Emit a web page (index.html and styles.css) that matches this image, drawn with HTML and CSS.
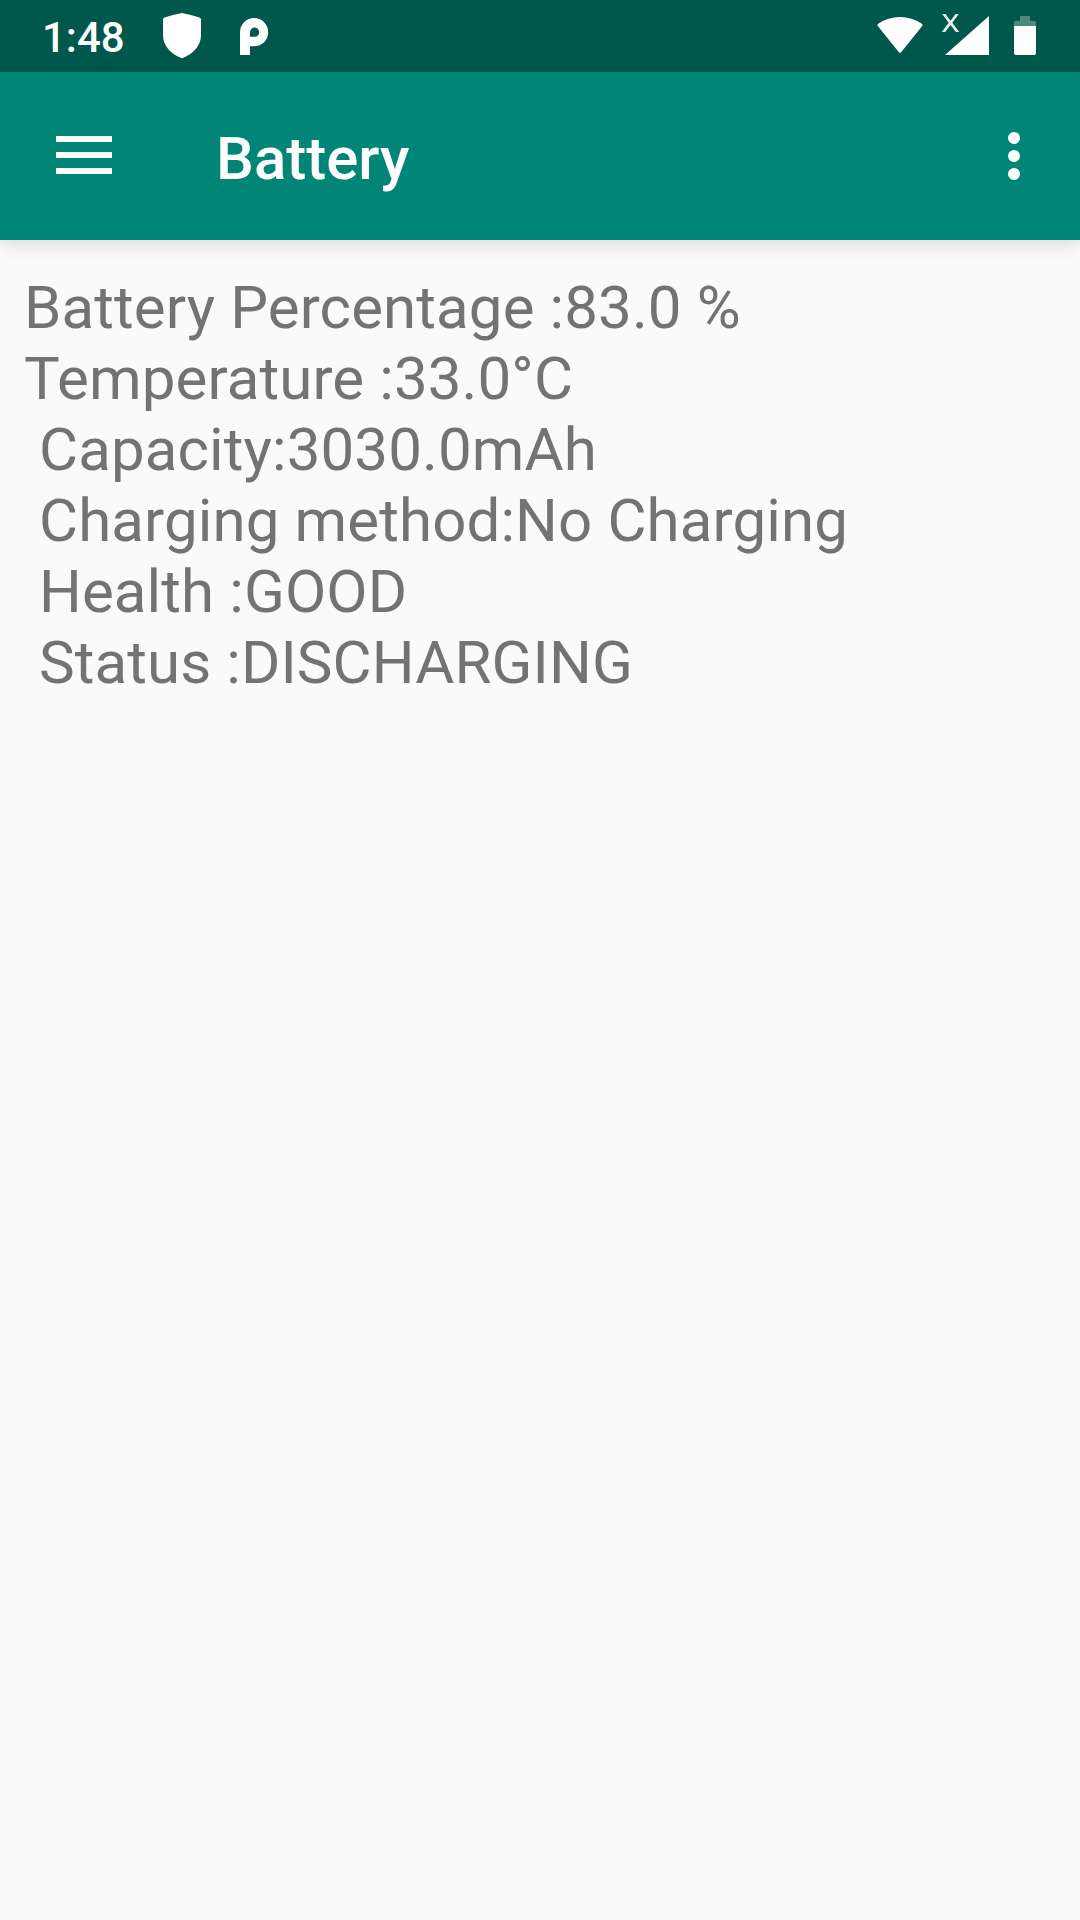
FILE: index.html
```html
<!DOCTYPE html>
<html lang="en">
<head>
<meta charset="utf-8">
<title>Battery</title>
<link rel="stylesheet" href="styles.css">
</head>
<body>
<div class="status-bar">
  <div class="status-left">
    <span class="clock">1:48</span>
    <svg class="shield" width="38" height="46" viewBox="0 0 38 46"><path d="M19 0C25 1 31 3 36.500 4.500Q38 5 38 6.500V22C38 33 30 41 19 45.300C8 41 0 33 0 22V6.500Q0 5 1.500 4.500C7 3 13 1 19 0Z"/></svg>
    <svg class="parking" width="30" height="38" viewBox="0 0 30 38"><path fill-rule="evenodd" d="M0 37V14.200A14.100 14.100 0 1 1 14.100 28.300H10V37ZM10 18.800V14.200A4.600 4.600 0 1 1 14.600 18.800Z"/></svg>
  </div>
  <div class="status-right">
    <svg width="46" height="37" viewBox="0 0 46 37"><path d="M1 9.300Q-.4 8 1.200 6.700C14-2.200 32-2.200 44.800 6.700Q46.400 8 45 9.300L24.300 35Q23 36.700 21.700 35Z"/></svg>
    <svg class="signal" width="48" height="42" viewBox="0 0 48 42"><path d="M48 2V41H4Z"/><path class="no-service" d="M1.200 0H4.500L9.500 6.700 14.500 0H17.800L11.300 8.800 18.200 18H14.900L9.500 11 4.100 18H.8L7.700 8.800Z"/></svg>
    <svg class="battery" width="22" height="39" viewBox="0 0 22 39"><path class="battery-empty" d="M6 0H16V5H20.500Q22 5 22 6.500V10H0V6.500Q0 5 1.500 5H6Z"/><path d="M0 10H22V37.300Q22 39 20.300 39H1.700Q0 39 0 37.300Z"/></svg>
  </div>
</div>
<header class="app-bar">
  <svg width="56" height="38" viewBox="0 0 56 38"><path d="M0 0H56V6H0ZM0 16H56V22H0ZM0 32H56V38H0Z"/></svg>
  <h1 class="title">Battery</h1>
  <svg class="more" width="12" height="48" viewBox="0 0 12 48"><circle cx="6" cy="6" r="6"/><circle cx="6" cy="24" r="6"/><circle cx="6" cy="42" r="6"/></svg>
</header>
<main class="details">Battery Percentage :83.0 %
Temperature :33.0°C
 Capacity:3030.0mAh
 Charging method:No Charging
 Health :GOOD
 Status :DISCHARGING</main>
</body>
</html>
```
FILE: styles.css
```css
body {
  margin: 0;
  min-height: 1920px;
  background: #fafafa;
  color: #737373;
  font-family: Roboto, sans-serif;
}

svg {
  display: block;
  flex: none;
  fill: #fff;
}

.status-bar {
  display: flex;
  justify-content: space-between;
  height: 72px;
  box-sizing: border-box;
  padding: 0 44px 0 42px;
  background: #00574b;
}

.status-left,
.status-right {
  display: flex;
  align-items: flex-start;
}

.clock {
  width: 121px;
  padding-top: 13px;
  color: #fff;
  font-size: 42px;
  font-weight: 500;
  line-height: 50px;
}

.shield {
  margin-top: 13px;
}

.parking {
  margin: 18px 0 0 39px;
}

.status-right {
  gap: 19px;
  padding-top: 17px;
}

.signal {
  margin: -3px 0 0 -1px;
}

.battery {
  margin: -1px 0 0 6px;
}

.no-service {
  fill: #e8f1ef;
}

.battery-empty {
  fill: #4d897f;
}

.app-bar {
  display: flex;
  align-items: center;
  height: 168px;
  box-sizing: border-box;
  padding: 0 60px 2px 56px;
  background: #008577;
  box-shadow: 0 5px 16px rgba(0, 0, 0, .12);
}

.title {
  flex: 1;
  margin: 7px 0 0 104px;
  color: #fff;
  font-size: 60px;
  font-weight: 500;
  line-height: 70px;
}

.more {
  margin-top: 2px;
}

.details {
  padding: 32px 24px;
  font-size: 60px;
  line-height: 71px;
  letter-spacing: .12px;
  white-space: pre;
}
```
